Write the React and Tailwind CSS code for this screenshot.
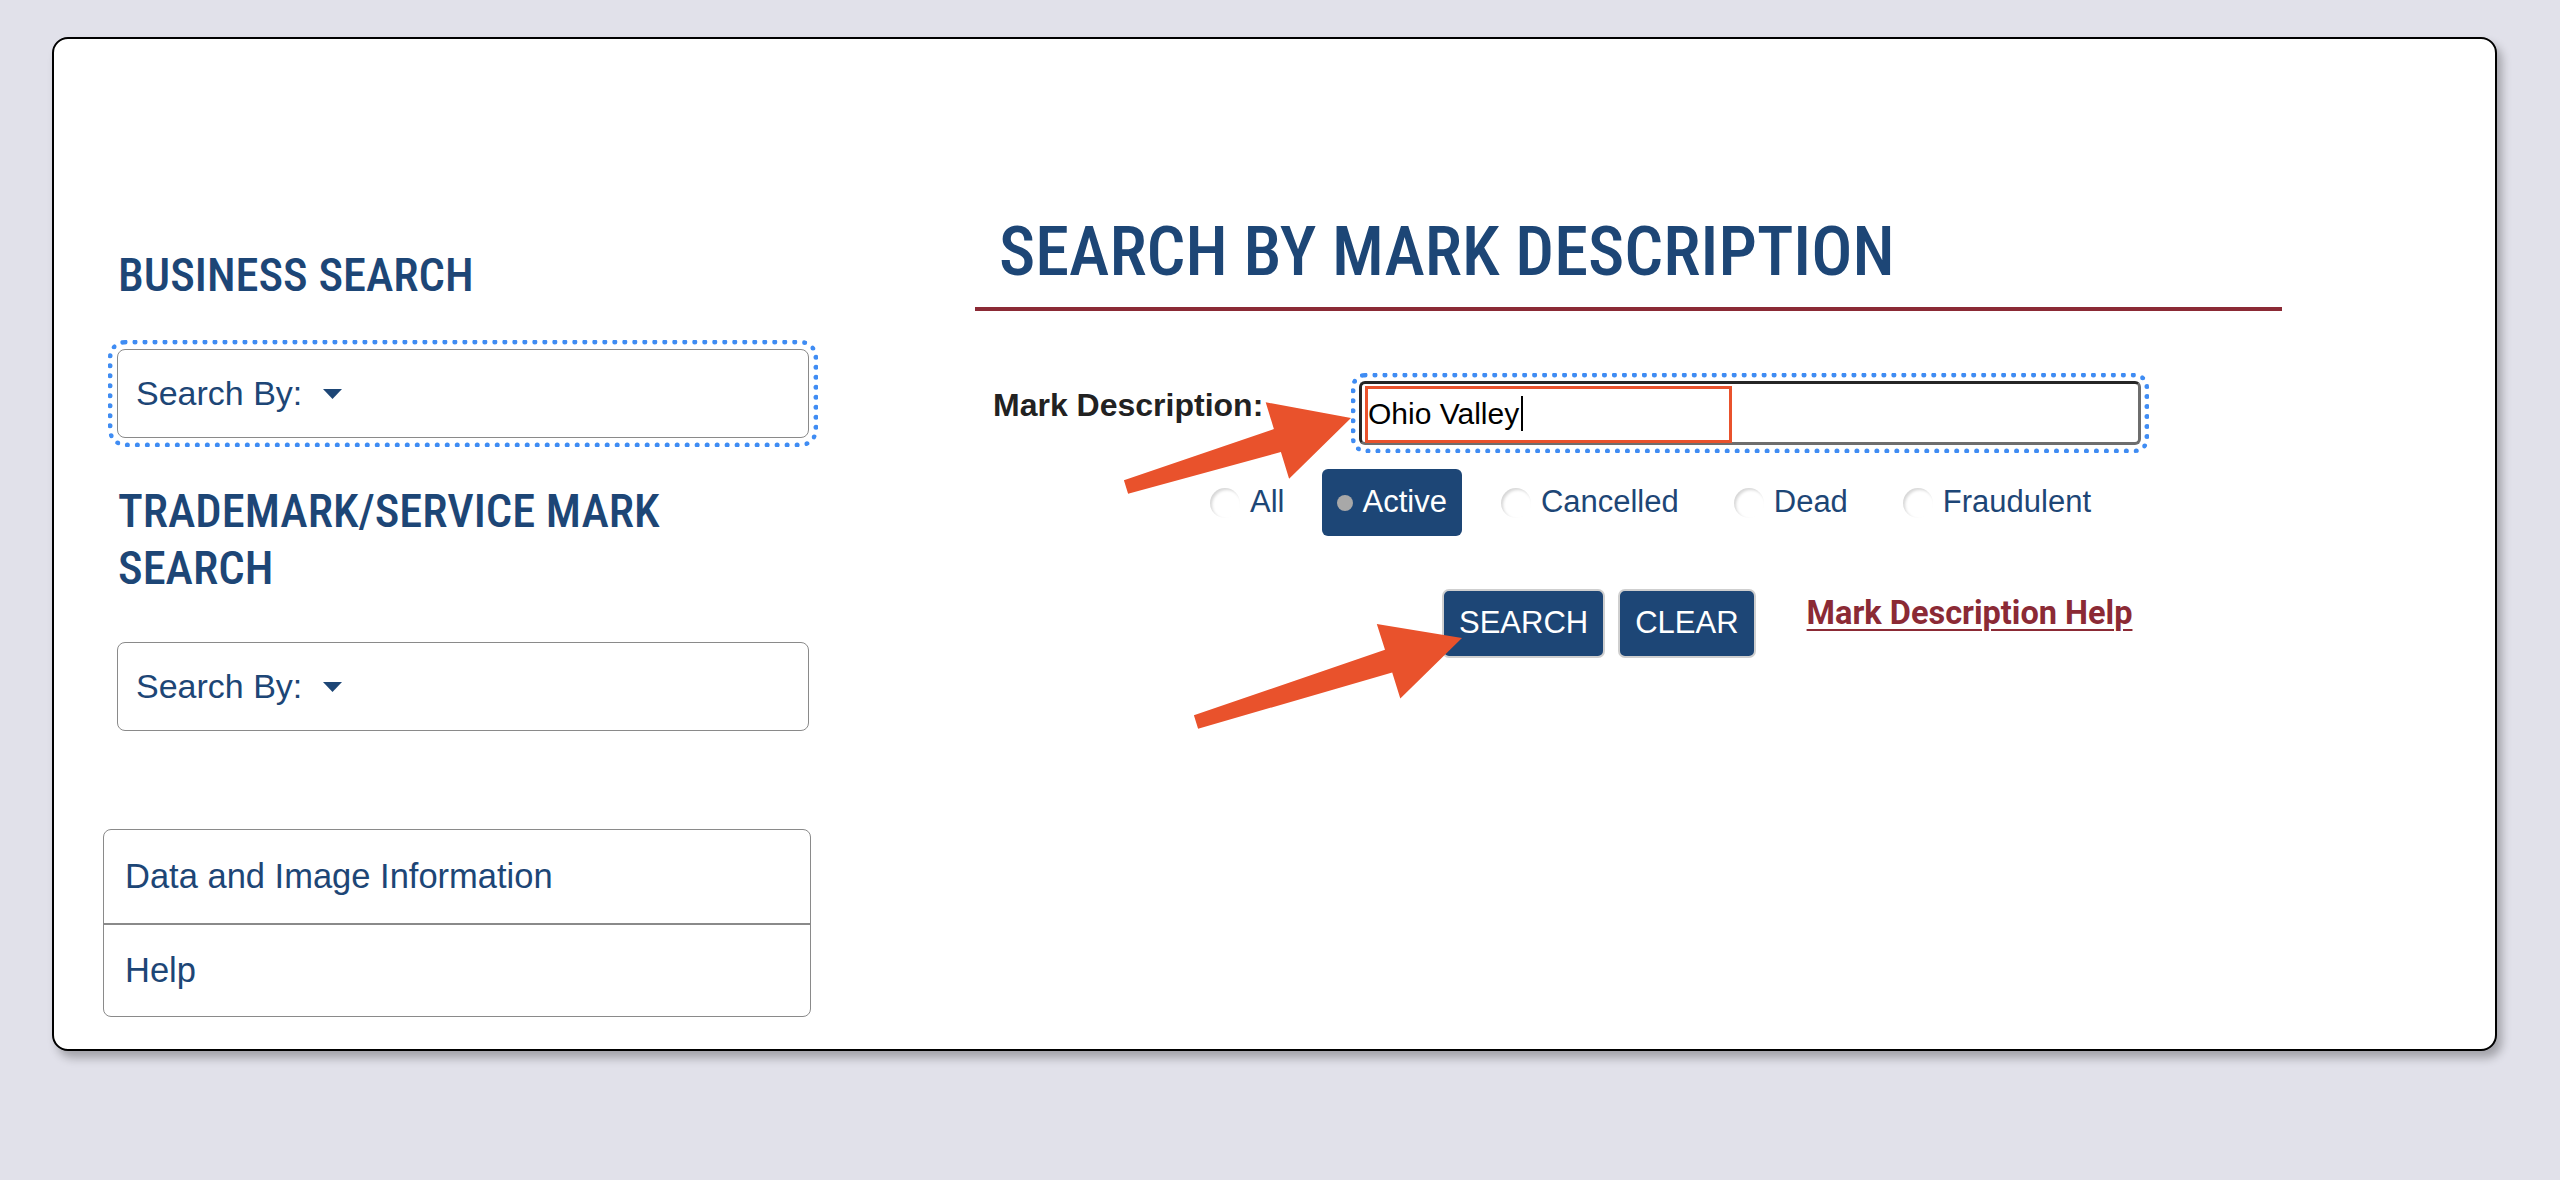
const navy = 'text-[#1d4676]'
const sans = { fontFamily: '"Liberation Sans", Arial, sans-serif' }
const cond = { fontFamily: '"Roboto Condensed", Roboto, sans-serif' }

// skitch style arrow: tail -> tip, shaft gets wider toward the head
function arrowPoints(tx, ty, px, py, headLen, headHalf, w1, w2) {
  const dx = px - tx
  const dy = py - ty
  const len = Math.hypot(dx, dy)
  const ux = dx / len
  const uy = dy / len
  const nx = -uy
  const ny = ux
  const bx = px - ux * headLen
  const by = py - uy * headLen
  const pts = [
    [tx + nx * w1 / 2, ty + ny * w1 / 2],
    [bx + nx * w2 / 2, by + ny * w2 / 2],
    [bx + nx * headHalf, by + ny * headHalf],
    [px, py],
    [bx - nx * headHalf, by - ny * headHalf],
    [bx - nx * w2 / 2, by - ny * w2 / 2],
    [tx - nx * w1 / 2, ty - ny * w1 / 2],
  ]
  return pts.map((p) => p.map((v) => v.toFixed(1)).join(',')).join(' ')
}

function Caret() {
  return (
    <svg width="19" height="10" viewBox="0 0 19 10" className="ml-[21px]">
      <path d="M0 0 L19 0 L9.5 10 Z" fill="#1d4676" />
    </svg>
  )
}

function SearchBy({ focused }) {
  return (
    <div
      className={`ml-[14px] h-[89px] w-[692px] flex items-center px-[18px] border border-[#8a8a8a] rounded-[8px] bg-white ${
        focused ? 'outline-[5px] outline-dotted outline-[#3f8cf3] outline-offset-[4px]' : ''
      }`}
    >
      <span className={`text-[34px] ${navy}`} style={sans}>Search By:</span>
      <Caret />
    </div>
  )
}

function Radio({ label, className }) {
  return (
    <label className={`flex items-center ${className}`}>
      <span className="w-[30px] h-[30px] rounded-full bg-white shadow-[inset_2px_2px_3px_rgba(0,0,0,0.16)]" />
      <span className={`ml-[10px] text-[31px] ${navy}`} style={sans}>{label}</span>
    </label>
  )
}

export default function App() {
  return (
    <div className="relative min-h-screen bg-[#e1e1ea] pt-[37px] pl-[52px] pr-[63px]">
      <div className="h-[1014px] bg-white border-2 border-black rounded-[16px] shadow-[5px_7px_10px_rgba(0,0,0,0.28)] flex items-start">
        {/* left nav */}
        <div className="ml-[49px] w-[708px] pt-[208px] flex flex-col">
          <h2 className={`ml-[15px] text-[46.5px] leading-[57px] font-medium ${navy}`} style={cond}>
            BUSINESS SEARCH
          </h2>
          <div className="mt-[45px]">
            <SearchBy focused />
          </div>
          <h2 className={`mt-[45px] ml-[15px] w-[580px] text-[46.5px] leading-[57px] font-medium ${navy}`} style={cond}>
            TRADEMARK/SERVICE MARK SEARCH
          </h2>
          <div className="mt-[45px]">
            <SearchBy />
          </div>
          <div className="mt-[98px] border border-[#8a8a8a] rounded-[8px] flex flex-col">
            <a className={`h-[93px] flex items-center px-[21px] text-[34.5px] ${navy}`} style={sans}>
              Data and Image Information
            </a>
            <a className={`h-[93px] flex items-center px-[21px] text-[34.5px] border-t-2 border-[#8a8a8a] ${navy}`} style={sans}>
              Help
            </a>
          </div>
        </div>

        {/* main */}
        <div className="ml-[164px] w-[1307px] pt-[171px] flex flex-col">
          <h1 className={`pl-[24px] text-[68.5px] leading-[84px] font-medium ${navy}`} style={cond}>
            SEARCH BY MARK DESCRIPTION
          </h1>
          <div className="mt-[13px] h-[4px] bg-[#8b2a35]" />

          <div className="mt-[70px] flex items-start">
            <label className="ml-[18px] mt-[6px] w-[366px] text-[32px] leading-[37px] font-bold text-[#222]" style={sans}>
              Mark Description:
            </label>
            <div className="relative w-[782px] h-[64px] flex items-center pl-[6px] border-[3px] border-t-[#262626] border-l-[#262626] border-r-[#6e6e6e] border-b-[#6e6e6e] rounded-[6px] outline-[5px] outline-dotted outline-[#3f8cf3] outline-offset-[3px]">
              <span className="text-[30px] text-black" style={sans}>Ohio Valley</span>
              <span className="ml-[2px] w-[2px] h-[35px] bg-black" />
              <div className="absolute left-[3px] top-[2px] w-[367px] h-[57px] border-[3px] border-[#e9522c]" />
            </div>
          </div>

          <div className="mt-[24px] h-[67px] flex items-center">
            <Radio label="All" className="ml-[235px]" />
            <label className="ml-[38px] h-[67px] flex items-center pl-[15px] pr-[15px] bg-[#1d4676] rounded-[6px]">
              <span className="w-[16px] h-[16px] rounded-full bg-[#a8a8a8]" />
              <span className="ml-[9px] text-[31px] text-white" style={sans}>Active</span>
            </label>
            <Radio label="Cancelled" className="ml-[39px]" />
            <Radio label="Dead" className="ml-[55px]" />
            <Radio label="Fraudulent" className="ml-[55px]" />
          </div>

          <div className="mt-[53px] flex items-start">
            <button className="ml-[467px] h-[69px] px-[15px] bg-[#1d4676] border-2 border-[#cfcfcf] rounded-[7px] text-[31px] text-white" style={sans}>
              SEARCH
            </button>
            <button className="ml-[13px] h-[69px] px-[15px] bg-[#1d4676] border-2 border-[#cfcfcf] rounded-[7px] text-[31px] text-white" style={sans}>
              CLEAR
            </button>
            <a className="ml-[51px] text-[32.5px] font-bold text-[#8b2a35] underline decoration-2 underline-offset-[5px]" style={{ fontFamily: 'Roboto, sans-serif' }}>
              Mark Description Help
            </a>
          </div>
        </div>
      </div>

      {/* annotation arrows */}
      <svg className="absolute left-0 top-0 pointer-events-none" width="2560" height="1180" viewBox="0 0 2560 1180">
        <polygon points={arrowPoints(1126, 487, 1351, 418, 77, 40, 14, 24)} fill="#e9522c" />
        <polygon points={arrowPoints(1196, 722, 1462, 638, 77, 39, 14, 24)} fill="#e9522c" />
      </svg>
    </div>
  )
}
